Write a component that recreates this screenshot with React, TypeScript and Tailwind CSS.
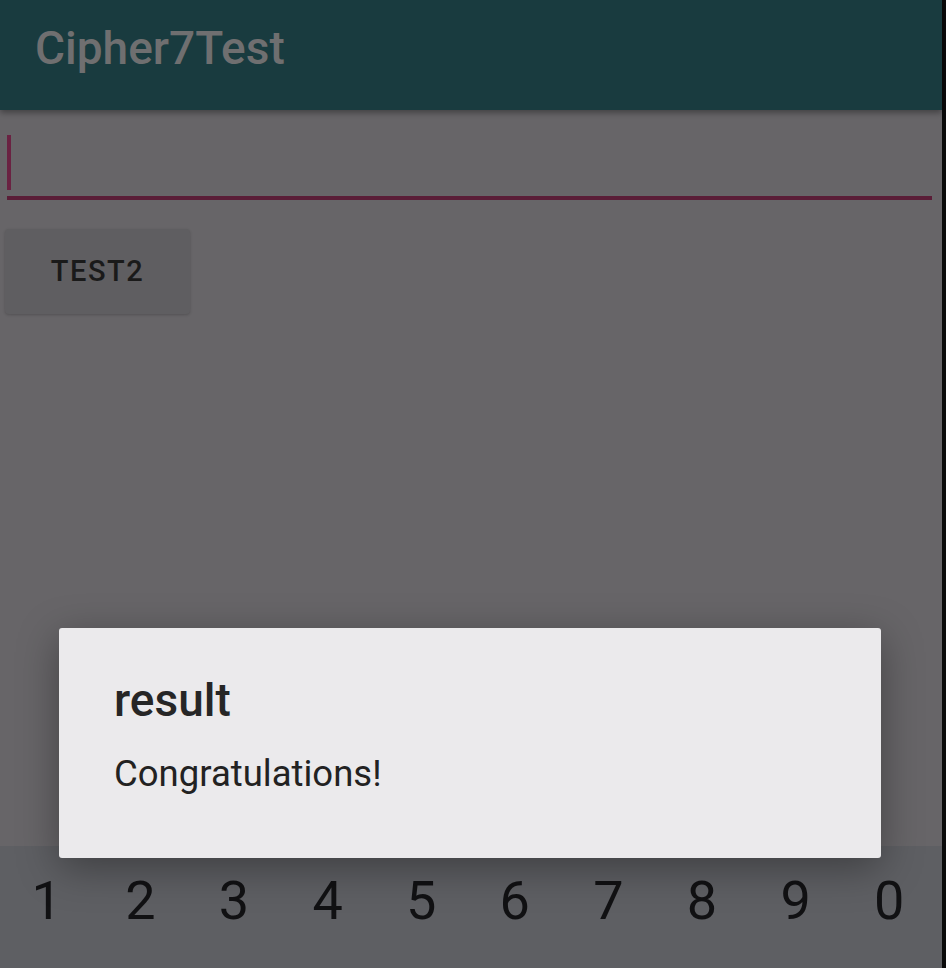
import React from "react";

export default function App() {
  const digits = ["1", "2", "3", "4", "5", "6", "7", "8", "9", "0"];
  return (
    <div
      className="flex h-[968px] w-[946px] overflow-hidden"
      style={{ fontFamily: "Roboto, 'Noto Sans', sans-serif" }}
    >
      <div className="relative flex w-[942px] flex-col bg-[#676568]">
        <div className="z-10 flex h-[110px] items-start bg-[#193b3f] pl-[35px] pt-[22px] shadow-[0_3px_6px_rgba(0,0,0,0.35)]">
          <span className="text-[46px] font-medium leading-[52px] text-[#6f6f70]">Cipher7Test</span>
        </div>
        <div className="flex flex-1 flex-col px-[7px]">
          <div className="flex h-[90px] flex-col pt-[25px]">
            <div className="h-[55px] w-[4px] bg-[#6a2242]" />
            <div className="mt-[6px] h-[4px] w-[925px] bg-[#5a1d37]" />
          </div>
          <div className="-ml-[2px] mt-[29px] flex h-[85px] w-[185px] items-center justify-center rounded-[4px] bg-[#5f5e61] shadow-[0_1px_3px_rgba(0,0,0,0.2)]">
            <span className="text-[29px] font-medium tracking-[1.5px] text-[#1a1a1a]">TEST2</span>
          </div>
        </div>
        <div className="grid h-[122px] grid-cols-10 bg-[#5e5f63] pr-[6px]">
          {digits.map((d) => (
            <div key={d} className="flex justify-center pt-[28px]">
              <span className="inline-block text-[54px] leading-[54px] text-[#111113]">{d}</span>
            </div>
          ))}
        </div>
        <div className="absolute left-[59px] top-[628px] flex h-[230px] w-[822px] flex-col rounded-[3px] bg-[#ebeaec] pl-[55px] pt-[46px] shadow-[0_10px_40px_rgba(0,0,0,0.35)]">
          <span className="text-[46px] font-medium leading-[52px] text-[#262626]">result</span>
          <span className="mt-[28px] text-[36.5px] leading-[40px] text-[#222222]">Congratulations!</span>
        </div>
      </div>
      <div className="w-[4px] bg-[#0a0a0a]" />
    </div>
  );
}
